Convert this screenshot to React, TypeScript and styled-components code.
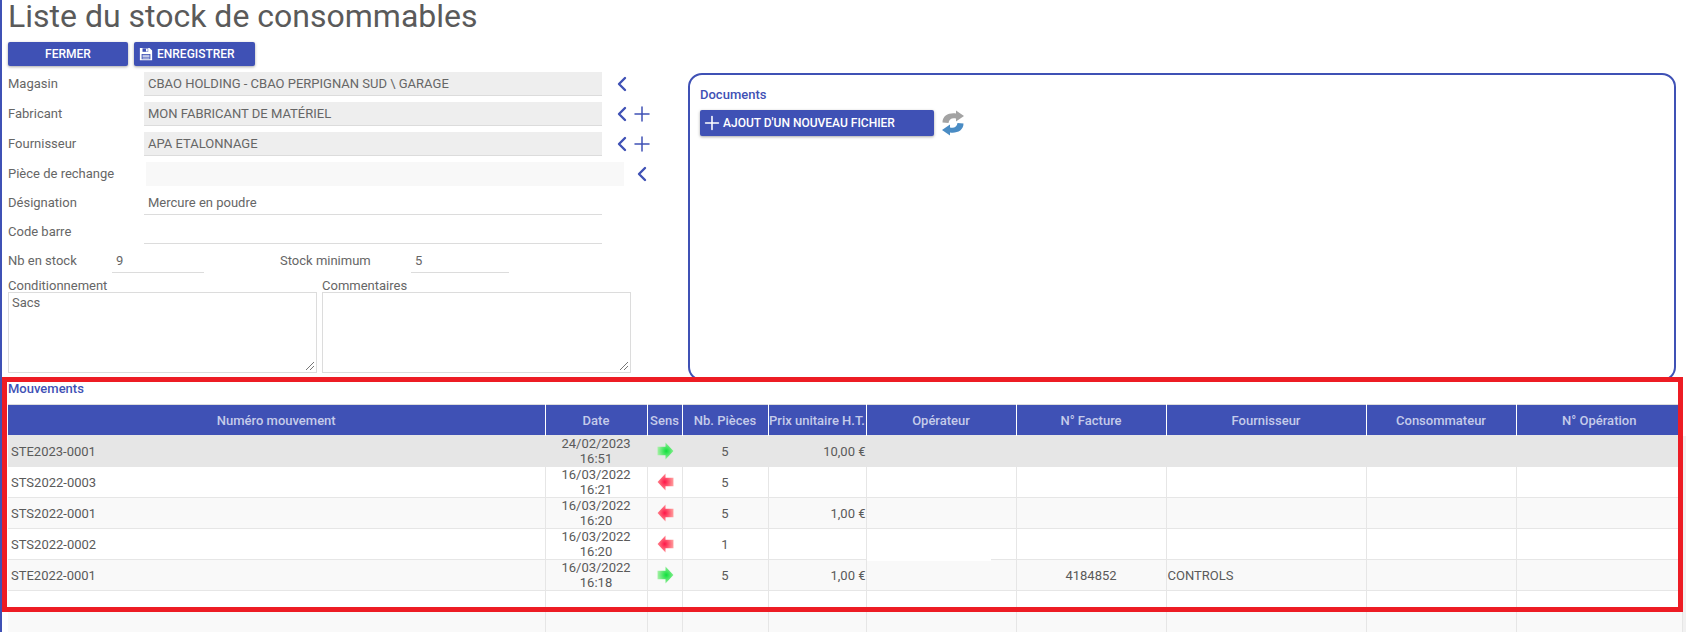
import React from "react";
import styled, { createGlobalStyle } from "styled-components";
import { Plus, ChevronLeft } from "lucide-react";

const GlobalStyle = createGlobalStyle`
  html, body {
    margin: 0;
    padding: 0;
    background: #fff;
    height: 632px;
    overflow: hidden;
    font-family: Roboto, "Liberation Sans", sans-serif;
    font-size: 13px;
    color: #666;
  }
`;

const Page = styled.div`
  position: relative;
  width: 1686px;
  height: 632px;
  overflow: hidden;
  border-left: 2px solid #3f51b5;
  box-sizing: border-box;
  padding-left: 6px;
`;

const Title = styled.h1`
  margin: 0;
  height: 42px;
  font-size: 32px;
  line-height: 32px;
  font-weight: 400;
  color: #5a5a5a;
`;

const Toolbar = styled.div`
  display: flex;
  gap: 6px;
  height: 30px;
`;

const Button = styled.button<{ $width: number; $height?: number; $start?: number }>`
  width: ${(p) => p.$width}px;
  height: ${(p) => p.$height ?? 24}px;
  padding: 0 0 0 ${(p) => p.$start ?? 0}px;
  border: 0;
  border-radius: 2px;
  background: #3f51b5;
  color: #fff;
  font-family: inherit;
  font-size: 12px;
  font-weight: 500;
  display: flex;
  align-items: center;
  justify-content: ${(p) => (p.$start !== undefined ? "flex-start" : "center")};
  box-shadow: 0 1px 3px rgba(0, 0, 0, 0.35);
`;

const Top = styled.div`
  display: flex;
  height: 305px;
`;

const Form = styled.div`
  width: 680px;
  flex: none;
`;

const Row = styled.div<{ $height: number }>`
  display: flex;
  height: ${(p) => p.$height}px;
`;

const Label = styled.label<{ $width: number; $offset?: number }>`
  width: ${(p) => p.$width}px;
  margin-left: ${(p) => p.$offset ?? 0}px;
  flex: none;
  line-height: 24px;
  color: #666;
`;

const Field = styled.div<{ $kind: "disabled" | "empty" | "plain"; $width: number }>`
  width: ${(p) => p.$width}px;
  height: 24px;
  flex: none;
  box-sizing: border-box;
  padding-left: ${(p) => (p.$kind === "empty" ? 0 : 4)}px;
  line-height: 24px;
  color: #666;
  background: ${(p) =>
    p.$kind === "disabled" ? "#eeeeee" : p.$kind === "empty" ? "#f8f8f8" : "transparent"};
  border-bottom: ${(p) => (p.$kind === "empty" ? "0" : "1px solid #dcdcdc")};
`;

const IconGroup = styled.div<{ $offset: number }>`
  margin-left: ${(p) => p.$offset}px;
  display: flex;
  align-items: center;
  height: 24px;
  color: #3f51b5;
`;

const AddIcon = styled(Plus)`
  margin-left: -4px;
`;

const Areas = styled.div`
  display: flex;
  gap: 5px;
`;

const AreaBox = styled.div<{ $width: number }>`
  width: ${(p) => p.$width}px;
`;

const AreaLabel = styled.div`
  height: 14px;
  line-height: 15px;
  margin-top: 1px;
  color: #666;
`;

const Area = styled.div`
  position: relative;
  height: 81px;
  box-sizing: border-box;
  border: 1px solid #dcdcdc;
  padding: 2px 3px;
  line-height: 16px;
  color: #666;
`;

const Grip = styled.svg`
  position: absolute;
  right: 1px;
  bottom: 1px;
`;

const Panel = styled.section`
  margin-top: 1px;
  width: 988px;
  height: 308px;
  flex: none;
  box-sizing: border-box;
  border: 2px solid #3f51b5;
  border-radius: 14px;
  padding: 12px 10px;
`;

const SectionTitle = styled.div`
  color: #3f51b5;
  font-size: 13px;
  font-weight: 500;
  line-height: 16px;
`;

const PanelActions = styled.div`
  display: flex;
  align-items: center;
  gap: 8px;
  margin-top: 7px;
`;

const Movements = styled.div`
  padding-top: 4px;
`;

const Table = styled.table`
  width: 1674px;
  margin-top: 7px;
  border-collapse: collapse;
  table-layout: fixed;
  border-top: 1px solid #dcdcdc;
  color: #5a5a5a;
`;

const Th = styled.th`
  height: 30px;
  padding: 0;
  background: #3f51b5;
  color: #c5cbea;
  font-size: 13px;
  font-weight: 500;
  text-align: center;
  border-left: 1px solid #fff;
  &:first-child { border-left: 0; }
`;

const Tr = styled.tr<{ $bg: string; $height: number }>`
  height: ${(p) => p.$height}px;
  background: ${(p) => p.$bg};
`;

const Td = styled.td<{ $align?: string; $pad?: string }>`
  position: relative;
  padding: ${(p) => p.$pad ?? "0"};
  text-align: ${(p) => p.$align ?? "center"};
  font-size: 13px;
  line-height: 15px;
  border: 1px solid #e6e6e6;
  white-space: ${(p) => (p.$align === "left" ? "nowrap" : "normal")};
  &:first-child { border-left: 0; }
`;

const Patch = styled.span`
  position: absolute;
  left: 0;
  top: -1px;
  width: 124px;
  height: 2px;
  background: #fff;
`;

const ArrowSvg = styled.svg`
  display: block;
  margin: 0 auto;
`;

const RedBox = styled.div`
  position: absolute;
  left: 0;
  top: 377px;
  width: 1681px;
  height: 235px;
  box-sizing: border-box;
  border: 5px solid #ed1c24;
  pointer-events: none;
`;

const ScrollStrip = styled.div`
  position: absolute;
  right: 0;
  top: 436px;
  bottom: 0;
  width: 3px;
  background: #f1f1f1;
`;

const SaveIcon = styled(({ className }: { className?: string }) => (
  <svg className={className} width="14" height="14" viewBox="0 0 16 16">
    <path d="M1 1H12L15 4V15H1Z" fill="#fff" />
    <path d="M4 1.500H10.500V5.500H4Z" fill="#3f51b5" />
    <path d="M8 2H10V5H8Z" fill="#fff" />
    <path d="M3 8H13V14H3Z" fill="#3f51b5" />
    <path d="M4 9.500H12M4 11H12M4 12.700H12" stroke="#fff" strokeWidth="0.9" />
  </svg>
))`
  margin-right: 4px;
  flex: none;
`;

const RefreshIcon = () => (
  <svg width="22" height="26" viewBox="0 0 22 26">
    <path d="M0.500 12.500C0.500 5.500 7 2.500 14 3.500V0.500L22 6L14 11.500V8.500C10 7.500 7 9 6.500 13Z" fill="#a3a3a3" />
    <path d="M21.500 13.500C21.500 20.500 15 23.500 8 22.500V25.500L0 20L8 14.500V17.500C12 18.500 15 17 15.500 13Z" fill="#4a8cc4" />
  </svg>
);

const Arrow = ({ dir, id }: { dir: "in" | "out"; id: string }) => {
  const inner = dir === "in" ? "#0fe03c" : "#ff1748";
  const outer = dir === "in" ? "#a4f0a4" : "#ff9c9c";
  return (
    <ArrowSvg width="17" height="18" viewBox="0 0 16 17">
      <defs>
        <radialGradient id={id} cx="55%" cy="50%" r="55%">
          <stop offset="0%" stopColor={inner} />
          <stop offset="100%" stopColor={outer} />
        </radialGradient>
      </defs>
      <path
        d="M0.500 4.500H8V0.500L15.500 8.500L8 16.500V12.500H0.500Z"
        fill={`url(#${id})`}
        transform={dir === "in" ? undefined : "matrix(-1 0 0 1 16 0)"}
      />
    </ArrowSvg>
  );
};

const columns = [
  { name: "Numéro mouvement", width: 537 },
  { name: "Date", width: 102 },
  { name: "Sens", width: 35 },
  { name: "Nb. Pièces", width: 86 },
  { name: "Prix unitaire H.T.", width: 98 },
  { name: "Opérateur", width: 150 },
  { name: "N° Facture", width: 150 },
  { name: "Fournisseur", width: 200 },
  { name: "Consommateur", width: 150 },
  { name: "N° Opération", width: 166 },
];

interface IMove {
  code: string;
  date: string;
  time: string;
  dir: "in" | "out";
  count: string;
  price: string;
  invoice: string;
  supplier: string;
  bg: string;
  patch?: boolean;
}

const moves: IMove[] = [
  { code: "STE2023-0001", date: "24/02/2023", time: "16:51", dir: "in", count: "5", price: "10,00 €", invoice: "", supplier: "", bg: "#e6e6e6" },
  { code: "STS2022-0003", date: "16/03/2022", time: "16:21", dir: "out", count: "5", price: "", invoice: "", supplier: "", bg: "#fff" },
  { code: "STS2022-0001", date: "16/03/2022", time: "16:20", dir: "out", count: "5", price: "1,00 €", invoice: "", supplier: "", bg: "#f9f9f9" },
  { code: "STS2022-0002", date: "16/03/2022", time: "16:20", dir: "out", count: "1", price: "", invoice: "", supplier: "", bg: "#fff" },
  { code: "STE2022-0001", date: "16/03/2022", time: "16:18", dir: "in", count: "5", price: "1,00 €", invoice: "4184852", supplier: "CONTROLS", bg: "#f9f9f9", patch: true },
];

const Back = () => <ChevronLeft size={24} strokeWidth={2.4} />;
const Add = () => <AddIcon size={24} strokeWidth={1.5} />;

function App() {
  return (
    <Page>
      <GlobalStyle />
      <Title>Liste du stock de consommables</Title>
      <Toolbar>
        <Button $width={120}>FERMER</Button>
        <Button $width={121} $start={5}>
          <SaveIcon />
          ENREGISTRER
        </Button>
      </Toolbar>
      <Top>
        <Form>
          <Row $height={30}>
            <Label $width={136}>Magasin</Label>
            <Field $kind="disabled" $width={458}>CBAO HOLDING - CBAO PERPIGNAN SUD \ GARAGE</Field>
            <IconGroup $offset={8}><Back /></IconGroup>
          </Row>
          <Row $height={30}>
            <Label $width={136}>Fabricant</Label>
            <Field $kind="disabled" $width={458}>MON FABRICANT DE MATÉRIEL</Field>
            <IconGroup $offset={8}><Back /><Add /></IconGroup>
          </Row>
          <Row $height={30}>
            <Label $width={136}>Fournisseur</Label>
            <Field $kind="disabled" $width={458}>APA ETALONNAGE</Field>
            <IconGroup $offset={8}><Back /><Add /></IconGroup>
          </Row>
          <Row $height={29}>
            <Label $width={138}>Pièce de rechange</Label>
            <Field $kind="empty" $width={478} />
            <IconGroup $offset={6}><Back /></IconGroup>
          </Row>
          <Row $height={29}>
            <Label $width={136}>Désignation</Label>
            <Field $kind="plain" $width={458}>Mercure en poudre</Field>
          </Row>
          <Row $height={29}>
            <Label $width={136}>Code barre</Label>
            <Field $kind="plain" $width={458} />
          </Row>
          <Row $height={28}>
            <Label $width={104}>Nb en stock</Label>
            <Field $kind="plain" $width={92}>9</Field>
            <Label $width={131} $offset={76}>Stock minimum</Label>
            <Field $kind="plain" $width={98}>5</Field>
          </Row>
          <Areas>
            <AreaBox $width={309}>
              <AreaLabel>Conditionnement</AreaLabel>
              <Area>
                Sacs
                <Grip width="10" height="10" viewBox="0 0 10 10" stroke="#777" strokeWidth="1">
                  <path d="M1 9L9 1M5 9L9 5" />
                </Grip>
              </Area>
            </AreaBox>
            <AreaBox $width={309}>
              <AreaLabel>Commentaires</AreaLabel>
              <Area>
                <Grip width="10" height="10" viewBox="0 0 10 10" stroke="#777" strokeWidth="1">
                  <path d="M1 9L9 1M5 9L9 5" />
                </Grip>
              </Area>
            </AreaBox>
          </Areas>
        </Form>
        <Panel>
          <SectionTitle>Documents</SectionTitle>
          <PanelActions>
            <Button $width={234} $height={26} $start={1}>
              <Plus size={22} strokeWidth={1.7} />
              AJOUT D'UN NOUVEAU FICHIER
            </Button>
            <RefreshIcon />
          </PanelActions>
        </Panel>
      </Top>
      <Movements>
        <SectionTitle>Mouvements</SectionTitle>
        <Table>
          <colgroup>
            {columns.map((c) => (
              <col key={c.name} style={{ width: c.width }} />
            ))}
          </colgroup>
          <thead>
            <tr>
              {columns.map((c) => (
                <Th key={c.name}>{c.name}</Th>
              ))}
            </tr>
          </thead>
          <tbody>
            {moves.map((m) => (
              <Tr key={m.code} $bg={m.bg} $height={31}>
                <Td $align="left" $pad="0 0 0 3px">{m.code}</Td>
                <Td>{m.date}<br />{m.time}</Td>
                <Td $pad="0 0 0 2px"><Arrow dir={m.dir} id={`arrow-${m.code}`} /></Td>
                <Td>{m.count}</Td>
                <Td $align="right">{m.price}</Td>
                <Td>{m.patch && <Patch />}</Td>
                <Td>{m.invoice}</Td>
                <Td $align="left" $pad="0 0 0 1px">{m.supplier}</Td>
                <Td />
                <Td />
              </Tr>
            ))}
            <Tr $bg="#fff" $height={21}>
              {columns.map((c) => <Td key={c.name} />)}
            </Tr>
            <Tr $bg="#f9f9f9" $height={31}>
              {columns.map((c) => <Td key={c.name} />)}
            </Tr>
          </tbody>
        </Table>
      </Movements>
      <ScrollStrip />
      <RedBox />
    </Page>
  );
}

export default App;
